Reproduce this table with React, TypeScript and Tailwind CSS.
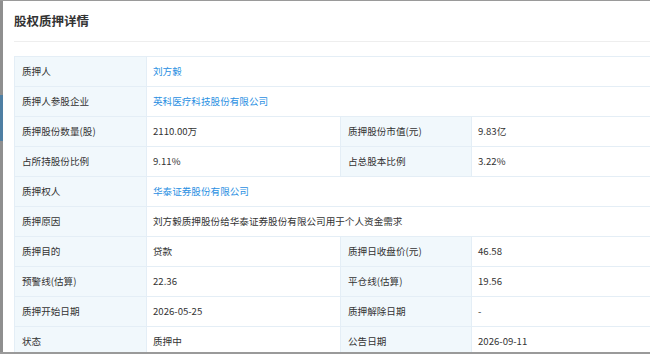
import React from "react";

type Cell = { label: string; value: string; link?: boolean };

const rows: Cell[][] = [
    [{ label: "质押人", value: "刘方毅", link: true }],
    [{ label: "质押人参股企业", value: "英科医疗科技股份有限公司", link: true }],
    [
        { label: "质押股份数量(股)", value: "2110.00万" },
        { label: "质押股份市值(元)", value: "9.83亿" },
    ],
    [
        { label: "占所持股份比例", value: "9.11%" },
        { label: "占总股本比例", value: "3.22%" },
    ],
    [{ label: "质押权人", value: "华泰证券股份有限公司", link: true }],
    [{ label: "质押原因", value: "刘方毅质押股份给华泰证券股份有限公司用于个人资金需求" }],
    [
        { label: "质押目的", value: "贷款" },
        { label: "质押日收盘价(元)", value: "46.58" },
    ],
    [
        { label: "预警线(估算)", value: "22.36" },
        { label: "平仓线(估算)", value: "19.56" },
    ],
    [
        { label: "质押开始日期", value: "2026-05-25" },
        { label: "质押解除日期", value: "-" },
    ],
    [
        { label: "状态", value: "质押中" },
        { label: "公告日期", value: "2026-09-11" },
    ],
];

function Label({ text }: { text: string }) {
    return (
        <td className="h-[30px] border border-[#e4eef6] bg-[#f1f8fc] pl-[7px] text-[#333]">
            {text}
        </td>
    );
}

export default function App() {
    return (
        <div
            className="flex h-[354px] w-[650px] flex-col overflow-hidden bg-[#9a9a9a]"
            style={{ fontFamily: '"Noto Sans CJK SC", "Noto Sans", sans-serif' }}
        >
            <div className="flex h-[352px] pt-[1px]">
                <div className="flex w-[3px] flex-col">
                    <div className="h-[94px] bg-[#8f8f8f]" />
                    <div className="h-[46px] bg-[#4f7fa3]" />
                    <div className="flex-1 bg-[#8f8f8f]" />
                </div>
                <div className="flex-1 overflow-hidden bg-white">
                    <div className="w-[720px] pl-[11px]">
                        <div className="flex h-[40px] items-center pt-[1px] text-[12.5px] font-bold text-[#333]">
                            股权质押详情
                        </div>
                        <div className="h-[1px] bg-[#eeeeee]" />
                        <table className="mt-[14px] w-full border-collapse text-[9.6px] leading-none">
                            <colgroup>
                                <col className="w-[132px]" />
                                <col className="w-[194px]" />
                                <col className="w-[131px]" />
                                <col />
                            </colgroup>
                            <tbody>
                                {rows.map((row, i) => (
                                    <tr key={i}>
                                        {row.map((c, j) => (
                                            <React.Fragment key={j}>
                                                <Label text={c.label} />
                                                <td
                                                    colSpan={row.length === 1 ? 3 : 1}
                                                    className={`h-[30px] border border-[#e4eef6] pl-[6px] ${c.link ? "text-[#2a8fe2]" : "text-[#333]"}`}
                                                >
                                                    {c.value}
                                                </td>
                                            </React.Fragment>
                                        ))}
                                    </tr>
                                ))}
                            </tbody>
                        </table>
                    </div>
                </div>
            </div>
        </div>
    );
}
